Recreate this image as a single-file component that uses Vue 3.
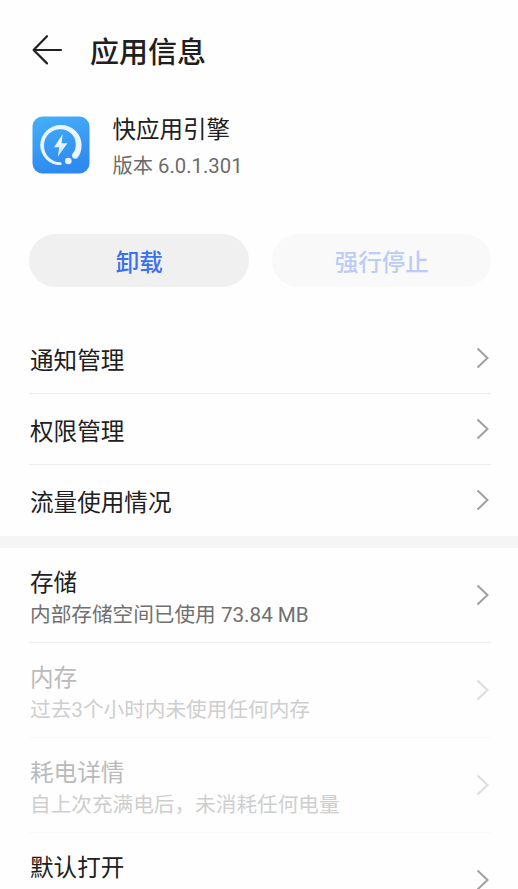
<script setup>
const plain = ['通知管理', '权限管理', '流量使用情况']
const details = [
  { title: '存储', note: '内部存储空间已使用 73.84 MB' },
  { title: '内存', note: '过去3个小时内未使用任何内存', disabled: true },
  { title: '耗电详情', note: '自上次充满电后，未消耗任何电量', disabled: true },
  { title: '默认打开', note: '未设置任何默认操作', faint: true },
]
</script>

<template>
  <main class="page">
    <header class="bar">
      <svg class="back" width="32" height="32" viewBox="0 0 32 32">
        <path d="M16 2.2 2.6 16 16 29.4M2.6 16H30" />
      </svg>
      <h1>应用信息</h1>
    </header>

    <section class="app">
      <svg class="logo" width="58" height="58" viewBox="0 0 58 58">
        <defs>
          <linearGradient id="tile" x1="0" y1="0" x2="0.25" y2="1">
            <stop offset="0" stop-color="#45b0f8" />
            <stop offset="1" stop-color="#2e8af0" />
          </linearGradient>
          <linearGradient id="bolt" x1="0" y1="0" x2="0" y2="1">
            <stop offset="0" stop-color="#fff" />
            <stop offset="1" stop-color="#c9e3fd" />
          </linearGradient>
        </defs>
        <rect x="0.5" y="0.5" width="57" height="57" rx="10" fill="url(#tile)" />
        <path d="M29 9A20.3 20.3 0 0 1 49.6 29Q49.6 36.5 45.8 41.4Q43.9 43.5 41.4 42.2Q38.9 40.4 40.6 37.6Q43.8 34 43.8 28.5A15.3 15.3 0 0 0 28.8 13.2A16 16 0 0 0 12 29.5A16.6 16.6 0 0 0 28.2 46.2Q30 46.6 29.8 48Q29.6 49.2 27.8 49.1A20.2 20.2 0 0 1 8.2 29A20.5 20.5 0 0 1 29 9Z" fill="#e9f5ff" />
        <circle cx="36.3" cy="45" r="3.3" fill="#e9f5ff" />
        <path d="M30.6 18.3 22 31.2h5.2l-1.4 9.5 9.6-13.4h-5.8z" fill="url(#bolt)" />
      </svg>
      <div class="identity">
        <div class="name">快应用引擎</div>
        <div class="version">版本 6.0.1.301</div>
      </div>
    </section>

    <section class="actions">
      <button>卸载</button>
      <button disabled>强行停止</button>
    </section>

    <section class="group">
      <div v-for="item in plain" :key="item" class="row">
        <span class="title">{{ item }}</span>
        <svg class="chevron" width="14" height="24" viewBox="0 0 14 24"><path d="M1.5 2.5 11.5 12l-10 9.5" /></svg>
      </div>
    </section>

    <div class="separator"></div>

    <section class="group">
      <div v-for="item in details" :key="item.title" class="row tall" :class="{ disabled: item.disabled, faint: item.faint }">
        <div>
          <div class="title">{{ item.title }}</div>
          <div class="note">{{ item.note }}</div>
        </div>
        <svg class="chevron" width="14" height="24" viewBox="0 0 14 24"><path d="M1.5 2.5 11.5 12l-10 9.5" /></svg>
      </div>
    </section>
  </main>
</template>

<style>
body {
  margin: 0;
  background: #fefefe;
}
</style>

<style scoped>
.page {
  box-sizing: border-box;
  width: 518px;
  height: 889px;
  overflow: hidden;
  background: #fefefe;
  color: #202020;
  font-family: Roboto, "Noto Sans CJK SC", sans-serif;
}
.bar {
  display: flex;
  align-items: center;
  height: 100px;
  padding-left: 31px;
}
.back {
  fill: none;
  stroke: #202020;
  stroke-width: 2.2;
  stroke-linecap: round;
  stroke-linejoin: round;
}
h1 {
  margin: 6px 0 0 27px;
  font-size: 29px;
  line-height: 40px;
  font-weight: 500;
}
.app {
  display: flex;
  height: 134px;
  padding: 0 32px;
}
.logo {
  margin-top: 16px;
}
.identity {
  margin: 13px 0 0 22.5px;
}
.name {
  font-size: 23.5px;
  line-height: 34px;
}
.version {
  margin-top: 4px;
  color: #6b6b6b;
  font-size: 20.3px;
  line-height: 30px;
}
.actions {
  display: grid;
  grid-template-columns: 1fr 1fr;
  gap: 23px;
  padding: 0 27px 36px 29px;
}
button {
  height: 53px;
  padding: 5px 0 0 1px;
  border: 0;
  border-radius: 27px;
  background: #f0f0f0;
  color: #3971f0;
  font: 500 23.5px/48px Roboto, "Noto Sans CJK SC", sans-serif;
}
button:disabled {
  background: #f9f9f9;
  color: #bccbf8;
}
.group {
  padding: 0 27px 0 29px;
}
.row {
  box-sizing: border-box;
  display: flex;
  align-items: center;
  justify-content: space-between;
  height: 71px;
  border-bottom: 1px solid #ededed;
}
.row:last-child {
  border-bottom-color: transparent;
}
.title {
  padding: 6px 0 0 1px;
  font-size: 23.6px;
  line-height: 34px;
}
.note {
  padding-left: 1px;
  color: #707070;
  font-size: 20.65px;
  line-height: 30px;
  white-space: nowrap;
}
.tall {
  height: 95px;
}
.tall .title {
  padding-top: 5px;
}
.disabled {
  border-bottom-color: #f9f9f9;
}
.disabled .title {
  color: #bababa;
}
.disabled .note {
  color: #cecece;
}
.faint .note {
  color: #b0b0b0;
}
.chevron {
  flex: none;
  margin-right: 1.5px;
  fill: none;
  stroke: #a0a0a0;
  stroke-width: 2;
}
.disabled .chevron {
  stroke: #dddddd;
}
.separator {
  height: 12px;
  background: #f5f5f5;
}
</style>
